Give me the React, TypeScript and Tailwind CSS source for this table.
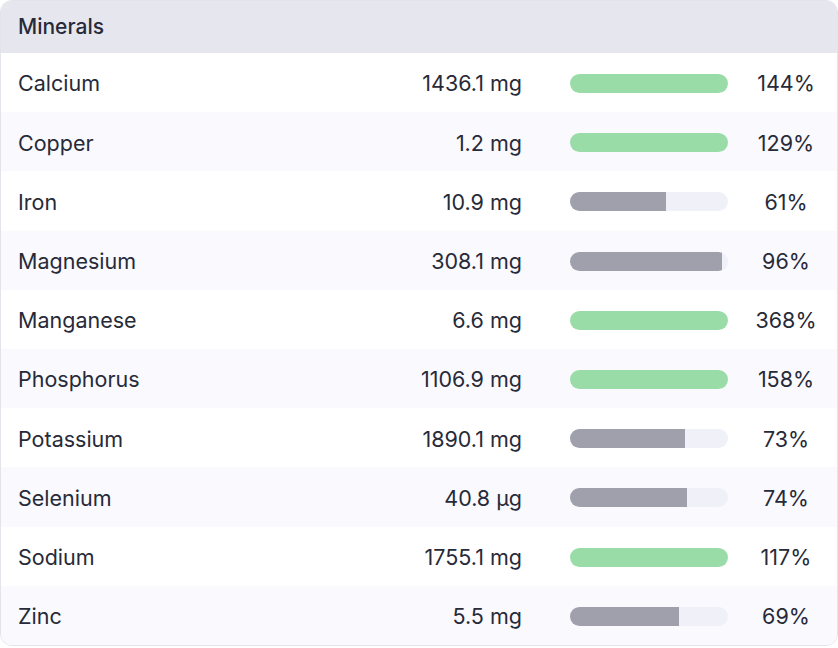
import React from "react";

type Mineral = { name: string; amount: string; pct: number };

const minerals: Mineral[] = [
  { name: "Calcium", amount: "1436.1 mg", pct: 144 },
  { name: "Copper", amount: "1.2 mg", pct: 129 },
  { name: "Iron", amount: "10.9 mg", pct: 61 },
  { name: "Magnesium", amount: "308.1 mg", pct: 96 },
  { name: "Manganese", amount: "6.6 mg", pct: 368 },
  { name: "Phosphorus", amount: "1106.9 mg", pct: 158 },
  { name: "Potassium", amount: "1890.1 mg", pct: 73 },
  { name: "Selenium", amount: "40.8 µg", pct: 74 },
  { name: "Sodium", amount: "1755.1 mg", pct: 117 },
  { name: "Zinc", amount: "5.5 mg", pct: 69 },
];

function Bar({ pct }: { pct: number }) {
  const full = pct >= 100;
  return (
    <div className="h-[19px] w-[158px] overflow-hidden rounded-full bg-[#f0f0f8]">
      <div
        className={full ? "h-full bg-[#99dca8]" : "h-full bg-[#9fa0ab]"}
        style={{ width: `${Math.min(pct, 100)}%` }}
      />
    </div>
  );
}

export default function App() {
  return (
    <div className="h-[648px] w-[838px] bg-white font-['Inter',sans-serif] text-[#272a38]">
      <div className="overflow-hidden rounded-[12px] border border-[#e3e4ea]">
        {/* header */}
        <div className="flex h-[52px] items-center bg-[#e6e6ef] px-[17px] text-[21px] font-medium">
          Minerals
        </div>

        {/* rows */}
        {minerals.map((m, i) => (
          <div
            key={m.name}
            className={
              "flex h-[59.2px] items-center pt-[2px] pl-[17px] pr-[9px] text-[21.5px] font-normal " +
              (i % 2 === 1 ? "bg-[#f9f9fe]" : "bg-white")
            }
          >
            <span className="flex-1">{m.name}</span>
            <span className="w-[160px] whitespace-nowrap text-right">{m.amount}</span>
            <div className="ml-[48px]">
              <Bar pct={m.pct} />
            </div>
            <span className="ml-[16px] w-[84px] text-center">{m.pct}%</span>
          </div>
        ))}
      </div>
    </div>
  );
}
